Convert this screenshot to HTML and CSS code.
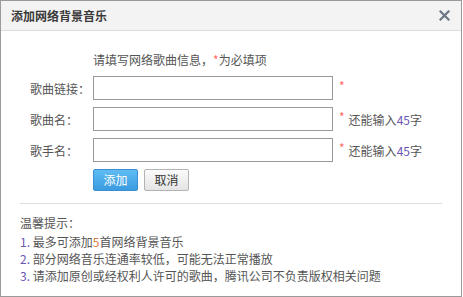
FILE: index.html
```html
<!DOCTYPE html>
<html>
<head>
<meta charset="utf-8">
<link rel="stylesheet" href="styles.css">
</head>
<body>
<div class="dialog">
  <div class="header">
    <span class="title">添加网络背景音乐</span>
    <span class="close">
      <svg width="11" height="11" viewBox="0 0 11 11"><path d="M1.5 1.5 L9.5 9.5 M9.5 1.5 L1.5 9.5" stroke="#6b7785" stroke-width="2.2" stroke-linecap="square"/></svg>
    </span>
  </div>
  <div class="body">
    <div class="intro">请填写网络歌曲信息，<span class="star">*</span>为必填项</div>
    <div class="row">
      <span class="label">歌曲链接：</span>
      <span class="input"></span>
      <span class="star">*</span>
    </div>
    <div class="row">
      <span class="label">歌曲名：</span>
      <span class="input"></span>
      <span class="star">*</span>
      <span class="hint">还能输入<span class="num">45</span>字</span>
    </div>
    <div class="row">
      <span class="label">歌手名：</span>
      <span class="input"></span>
      <span class="star">*</span>
      <span class="hint">还能输入<span class="num">45</span>字</span>
    </div>
    <div class="buttons">
      <span class="btn btn-primary">添加</span>
      <span class="btn btn-default">取消</span>
    </div>
    <div class="sep"></div>
    <div class="tips">
      <div class="tips-title">温馨提示：</div>
      <div class="tip"><span class="num">1.</span> 最多可添加<span class="five">5</span>首网络背景音乐</div>
      <div class="tip"><span class="num">2.</span> 部分网络音乐连通率较低，可能无法正常播放</div>
      <div class="tip"><span class="num">3.</span> 请添加原创或经权利人许可的歌曲，腾讯公司不负责版权相关问题</div>
    </div>
  </div>
</div>
</body>
</html>
```

FILE: styles.css
```css
html, body {
  margin: 0;
  padding: 0;
  background: #ffffff;
}
body {
  font-family: "Noto Sans CJK SC", "Liberation Sans", sans-serif;
  font-size: 12px;
  color: #555;
}
.dialog {
  width: 460px;
  height: 295px;
  border: 1px solid #9a9a9a;
  background: #fff;
  overflow: hidden;
}
.header {
  height: 29px;
  background: #f3f3f3;
  border-bottom: 1px solid #dcdcdc;
  display: flex;
  align-items: center;
  justify-content: space-between;
  padding: 0 11px 0 10px;
}
.title {
  font-size: 12px;
  font-weight: bold;
  color: #3a3a3a;
}
.close {
  display: flex;
  align-items: center;
}
.body {
  padding: 20px 0 0 0;
}
.intro {
  padding-left: 92px;
  line-height: 18px;
  height: 18px;
  color: #555;
}
.star {
  color: #f66;
}
.row {
  display: flex;
  align-items: center;
  margin-top: 7px;
  height: 24px;
}
.label {
  width: 63px;
  padding-left: 29px;
  color: #555;
}
.input {
  width: 238px;
  height: 22px;
  border: 1px solid #999;
  background: #fff;
}
.row .star {
  margin-left: 6px;
  position: relative;
  top: -3px;
}
.hint {
  margin-left: 4px;
  color: #555;
}
.num {
  color: #6a55b5;
}
.five {
  color: #d9783c;
}
.buttons {
  display: flex;
  gap: 6px;
  margin-top: 7px;
  padding-left: 92px;
}
.btn {
  height: 20px;
  width: 43px;
  line-height: 20px;
  text-align: center;
  border-radius: 2px;
  font-size: 12px;
}
.btn-primary {
  background: linear-gradient(#5fbcf2, #3a9be0);
  border: 1px solid #3a8fd2;
  color: #fff;
}
.btn-default {
  background: linear-gradient(#fbfbfb, #e4e4e4);
  border: 1px solid #b3b3b3;
  color: #333;
}
.sep {
  margin: 12px 19px 0 19px;
  height: 1px;
  background: #dedede;
}
.tips {
  padding: 10px 0 0 19px;
  line-height: 17px;
  color: #555;
}
.tips-title {
  margin-bottom: 2px;
}
```
